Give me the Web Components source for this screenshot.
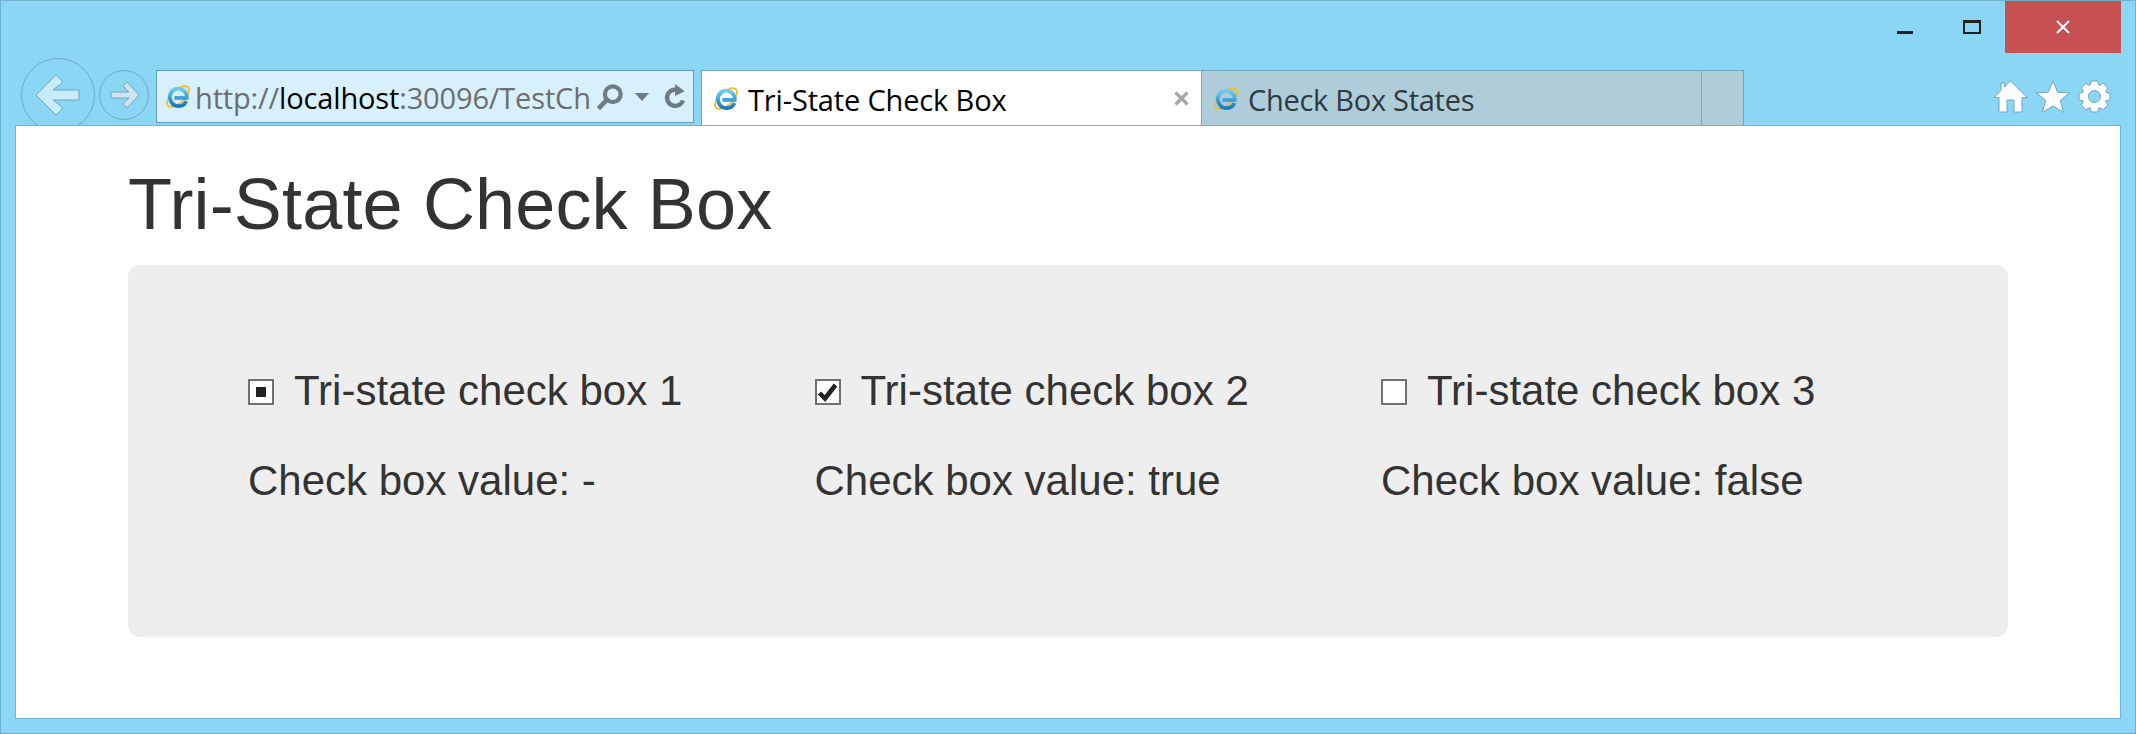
<!DOCTYPE html>
<html lang="en">
<head>
<meta charset="utf-8">
<title>Tri-State Check Box</title>
<style>
    html, body { margin: 0; padding: 0; }
</style>
</head>
<body>
<ie-window>
    <ie-caption slot="caption"></ie-caption>
    <ie-back slot="nav" size="74"></ie-back>
    <ie-back slot="nav" size="50" forward></ie-back>
    <ie-address slot="nav"></ie-address>
    <ie-tab slot="nav" active>Tri-State Check Box</ie-tab>
    <ie-tab slot="nav">Check Box States</ie-tab>
    <ie-tab slot="nav" blank></ie-tab>
    <ie-tools slot="tools"></ie-tools>

    <demo-page heading="Tri-State Check Box">
        <check-demo state="indeterminate" value="-">Tri-state check box 1</check-demo>
        <check-demo state="checked" value="true">Tri-state check box 2</check-demo>
        <check-demo state="unchecked" value="false">Tri-state check box 3</check-demo>
    </demo-page>
</ie-window>

<script>
const UI_FONT = '"Open Sans", "Noto Sans", sans-serif';
const PAGE_FONT = '"Liberation Sans", Arial, sans-serif';

const IE_LOGO = `
    <svg width="24" height="25" viewBox="0 0 24 25">
        <defs>
            <linearGradient id="ieblue" x1="0" y1="0" x2="0" y2="1">
                <stop offset="0" stop-color="#6fcdf4"/>
                <stop offset="1" stop-color="#1478c4"/>
            </linearGradient>
        </defs>
        <ellipse cx="12" cy="12.5" rx="13.500" ry="6.500" transform="rotate(-42 12 12.5)" fill="none" stroke="#f2bf1f" stroke-width="1.800"/>
        <path d="M20.400 17A8.500 8.500 0 0 1 4.800 17 8.500 8.500 0 1 1 20.800 13.800H8.400" fill="none" stroke="url(#ieblue)" stroke-width="3.800"/>
    </svg>`;

class IeWindow extends HTMLElement {
    constructor () {
        super();
        this.root = this.attachShadow({mode: 'open'});
        this.root.innerHTML = `
            <style>
                :host {
                    display: flex;
                    flex-direction: column;
                    box-sizing: border-box;
                    width: 2136px;
                    height: 734px;
                    background: #8ad6f4;
                    border: 1px solid #6fb0cb;
                    overflow: hidden;
                }
                .bar {
                    display: flex;
                    align-items: flex-start;
                    height: 72px;
                    padding: 0 24px 0 20px;
                    overflow: hidden;
                }
                .nav {
                    display: flex;
                    align-items: flex-start;
                    flex: 1;
                }
                .client {
                    flex: 1;
                    margin: 0 14px 14px 14px;
                    border: 1px solid #6cb4d0;
                    background: #fff;
                    min-height: 0;
                }
            </style>
            <slot name="caption"></slot>
            <div class="bar">
                <div class="nav"><slot name="nav"></slot></div>
                <slot name="tools"></slot>
            </div>
            <div class="client"><slot></slot></div>
        `;
    }
}

class IeCaption extends HTMLElement {
    constructor () {
        super();
        this.root = this.attachShadow({mode: 'open'});
        this.root.innerHTML = `
            <style>
                :host {
                    display: flex;
                    justify-content: flex-end;
                    height: 52px;
                    padding-right: 14px;
                }
                .min, .max {
                    display: flex;
                    justify-content: center;
                    box-sizing: border-box;
                    width: 66px;
                }
                .min { padding-top: 30px; margin-right: 1px; }
                .min i { display: block; width: 16px; height: 3px; background: #222; }
                .max { padding-top: 19px; }
                .max i {
                    display: block;
                    box-sizing: border-box;
                    width: 18px;
                    height: 14px;
                    border: 2px solid #222;
                    border-top-width: 3px;
                }
                .close {
                    display: flex;
                    align-items: center;
                    justify-content: center;
                    width: 116px;
                    background: #c75050;
                }
            </style>
            <div class="min"><i></i></div>
            <div class="max"><i></i></div>
            <div class="close">
                <svg width="14" height="14" viewBox="0 0 14 14"><path d="M1 1L13 13M13 1L1 13" stroke="#fff" stroke-width="2"/></svg>
            </div>
        `;
    }
}

class IeBack extends HTMLElement {
    constructor () {
        super();
        this.root = this.attachShadow({mode: 'open'});
    }

    connectedCallback () {
        const size = Number(this.getAttribute('size'));
        const forward = this.hasAttribute('forward');
        const arrow = forward
            ? '<path d="M11 21H29L23 15l4-4L39 24 27 37l-4-4 6-6H11z" fill="#cbe6f2" stroke="#6fa8c0" stroke-linejoin="round"/>'
            : '<path d="M14 36L34 16l7 7-10 8H57V41H31l10 8-7 7z" fill="#c8ecfb" stroke="#6fa8c0" stroke-linejoin="round"/>';
        this.root.innerHTML = `
            <style>
                :host {
                    display: block;
                    flex: none;
                    box-sizing: border-box;
                    width: ${size}px;
                    height: ${size}px;
                    margin-top: ${forward ? 17 : 5}px;
                    margin-right: ${forward ? 7 : 4}px;
                    border: 1px solid #6fa8c0;
                    border-radius: 50%;
                }
                svg { display: block; }
            </style>
            <svg width="${size - 2}" height="${size - 2}" viewBox="0 0 ${size - 2} ${size - 2}">${arrow}</svg>
        `;
    }
}

class IeAddress extends HTMLElement {
    constructor () {
        super();
        this.root = this.attachShadow({mode: 'open'});
        this.root.innerHTML = `
            <style>
                :host {
                    display: flex;
                    align-items: center;
                    flex: none;
                    box-sizing: border-box;
                    width: 538px;
                    height: 53px;
                    margin-top: 17px;
                    margin-right: 7px;
                    padding-left: 9px;
                    background: #d7f0fc;
                    border: 1px solid #5f9fb5;
                    font: 29px ${UI_FONT};
                    letter-spacing: -0.15px;
                    color: #6d6d6d;
                    white-space: nowrap;
                }
                .url { margin-left: 5px; padding-top: 2px; width: 400px; overflow: hidden; }
                b { font-weight: 400; color: #000; }
                svg { display: block; flex: none; }
                .search { margin-left: 2px; }
                .drop { margin-left: 11px; }
                .refresh { margin-left: 14px; }
            </style>
            ${IE_LOGO}
            <span class="url">http://<b>localhost</b>:30096/TestCh</span>
            <svg class="search" width="26" height="26" viewBox="0 0 28 28">
                <circle cx="17" cy="11" r="8.500" fill="none" stroke="#6e7b82" stroke-width="4.500"/>
                <path d="M10.500 17L1.500 26.500" stroke="#6e7b82" stroke-width="5"/>
            </svg>
            <svg class="drop" width="16" height="8" viewBox="0 0 16 9"><path d="M0 0h16L8 9z" fill="#6e7b82"/></svg>
            <svg class="refresh" width="22" height="26" viewBox="0 0 22 27">
                <path d="M17.500 8.500A8.500 8.500 0 1 0 19.300 17" fill="none" stroke="#6e7b82" stroke-width="4.500"/>
                <path d="M11 0l10 7.500-10 5z" fill="#6e7b82"/>
            </svg>
        `;
    }
}

class IeTab extends HTMLElement {
    constructor () {
        super();
        this.root = this.attachShadow({mode: 'open'});
    }

    connectedCallback () {
        const active = this.hasAttribute('active');
        const blank = this.hasAttribute('blank');
        const width = blank ? 43 : 501;
        this.root.innerHTML = `
            <style>
                :host {
                    display: flex;
                    align-items: center;
                    flex: none;
                    box-sizing: border-box;
                    width: ${width}px;
                    height: 56px;
                    margin-top: 17px;
                    margin-right: -1px;
                    padding-left: 12px;
                    background: ${active ? '#fff' : '#aecdd9'};
                    border: 1px solid #6fa8c0;
                    border-bottom-color: #6cb4d0;
                    font: 29px ${UI_FONT};
                    letter-spacing: ${active ? -0.15 : -0.28}px;
                    color: ${active ? '#000' : '#2d3a40'};
                    white-space: nowrap;
                    position: relative;
                    z-index: ${active ? 1 : 0};
                }
                .title { margin-left: 10px; padding-top: 2px; flex: 1; }
                svg { display: block; flex: none; }
                .close { margin-right: 12px; }
            </style>
            ${blank ? '' : IE_LOGO}
            ${blank ? '' : '<span class="title"><slot></slot></span>'}
            ${active ? '<svg class="close" width="15" height="15" viewBox="0 0 15 15"><path d="M1.500 1.500l12 12M13.500 1.500l-12 12" stroke="#a9a9a9" stroke-width="3.500"/></svg>' : ''}
        `;
    }
}

class IeTools extends HTMLElement {
    constructor () {
        super();
        this.root = this.attachShadow({mode: 'open'});
    }

    _gearPath () {
        // 8 teeth, drawn as one outline round the centre
        const c = 16.5;
        const pts = [];
        for (let i = 0; i < 8; i++) {
            const a = i * Math.PI / 4 - Math.PI / 2;
            [[-0.36, 12.2], [-0.21, 15.8], [0.21, 15.8], [0.36, 12.2]].forEach(([d, r]) => {
                pts.push((c + r * Math.cos(a + d)).toFixed(2) + ' ' + (c + r * Math.sin(a + d)).toFixed(2));
            });
        }
        return 'M' + pts.join('L') + 'Z';
    }

    connectedCallback () {
        this.root.innerHTML = `
            <style>
                :host {
                    display: flex;
                    gap: 8px;
                    flex: none;
                    margin-top: 27px;
                }
                svg { display: block; }
                .i { fill: #fff; stroke: #6fa5bd; stroke-width: 1; }
            </style>
            <svg width="35" height="33" viewBox="0 0 35 33">
                <path class="i" d="M17.500.8L34 17.500h-5V32h-8V20h-7v12H6V17.500H1L8 10.500V3h3.500v4z"/>
            </svg>
            <svg width="34" height="33" viewBox="0 0 34 33">
                <path class="i" d="M17 .8l4.600 11.400L33.500 12.800l-9.200 7.600 3.200 12-10.500-6.500-10.500 6.500 3.200-12L.5 12.800l11.900-.6z"/>
            </svg>
            <svg width="33" height="33" viewBox="0 0 33 33">
                <path class="i" d="${this._gearPath()}"/>
                <circle cx="16.500" cy="16.500" r="6" fill="#8ad6f4" stroke="#6fa5bd"/>
            </svg>
        `;
    }
}

class DemoPage extends HTMLElement {
    constructor () {
        super();
        this.root = this.attachShadow({mode: 'open'});
    }

    connectedCallback () {
        this.root.innerHTML = `
            <style>
                :host {
                    display: block;
                    padding: 0 112px;
                    font-family: ${PAGE_FONT};
                    color: #333;
                }
                h1 {
                    margin: 0;
                    padding-top: 38px;
                    height: 139px;
                    box-sizing: border-box;
                    font-size: 72px;
                    font-weight: 400;
                    line-height: 80px;
                    letter-spacing: 0.15px;
                }
                .panel {
                    display: grid;
                    grid-template-columns: repeat(3, 566.5px);
                    box-sizing: border-box;
                    height: 372px;
                    padding: 0 0 0 120px;
                    background: #eee;
                    border-radius: 12px;
                }
            </style>
            <h1>${this.getAttribute('heading')}</h1>
            <div class="panel"><slot></slot></div>
        `;
    }
}

class CheckDemo extends HTMLElement {
    constructor () {
        super();
        this.root = this.attachShadow({mode: 'open'});
    }

    connectedCallback () {
        const state = this.getAttribute('state');
        this.root.innerHTML = `
            <style>
                :host {
                    display: flex;
                    flex-direction: column;
                    gap: 42px;
                    padding-top: 102px;
                    font-size: 42px;
                    line-height: 48px;
                    color: #333;
                }
                .row {
                    display: flex;
                    align-items: center;
                    gap: 20px;
                }
            </style>
            <div class="row">
                <tri-state-box state="${state}"></tri-state-box>
                <span><slot></slot></span>
            </div>
            <div>Check box value: ${this.getAttribute('value')}</div>
        `;
    }
}

class TriStateBox extends HTMLElement {
    constructor () {
        super();
        this.root = this.attachShadow({mode: 'open'});
    }

    connectedCallback () {
        const state = this.getAttribute('state');
        let mark = '';
        if (state === 'indeterminate') {
            mark = '<i></i>';
        } else if (state === 'checked') {
            mark = '<svg width="22" height="22" viewBox="0 0 22 22"><path d="M2.500 12L8 17.500 18.500 4" fill="none" stroke="#222" stroke-width="4.500"/></svg>';
        }
        this.root.innerHTML = `
            <style>
                :host {
                    display: flex;
                    align-items: center;
                    justify-content: center;
                    flex: none;
                    box-sizing: border-box;
                    width: 26px;
                    height: 26px;
                    background: #fff;
                    border: 2px solid #707070;
                    position: relative;
                    top: 1px;
                }
                i { display: block; width: 10px; height: 10px; background: #222; }
                svg { display: block; }
            </style>
            ${mark}
        `;
    }
}

customElements.define('ie-window', IeWindow);
customElements.define('ie-caption', IeCaption);
customElements.define('ie-back', IeBack);
customElements.define('ie-address', IeAddress);
customElements.define('ie-tab', IeTab);
customElements.define('ie-tools', IeTools);
customElements.define('demo-page', DemoPage);
customElements.define('check-demo', CheckDemo);
customElements.define('tri-state-box', TriStateBox);
</script>
</body>
</html>
